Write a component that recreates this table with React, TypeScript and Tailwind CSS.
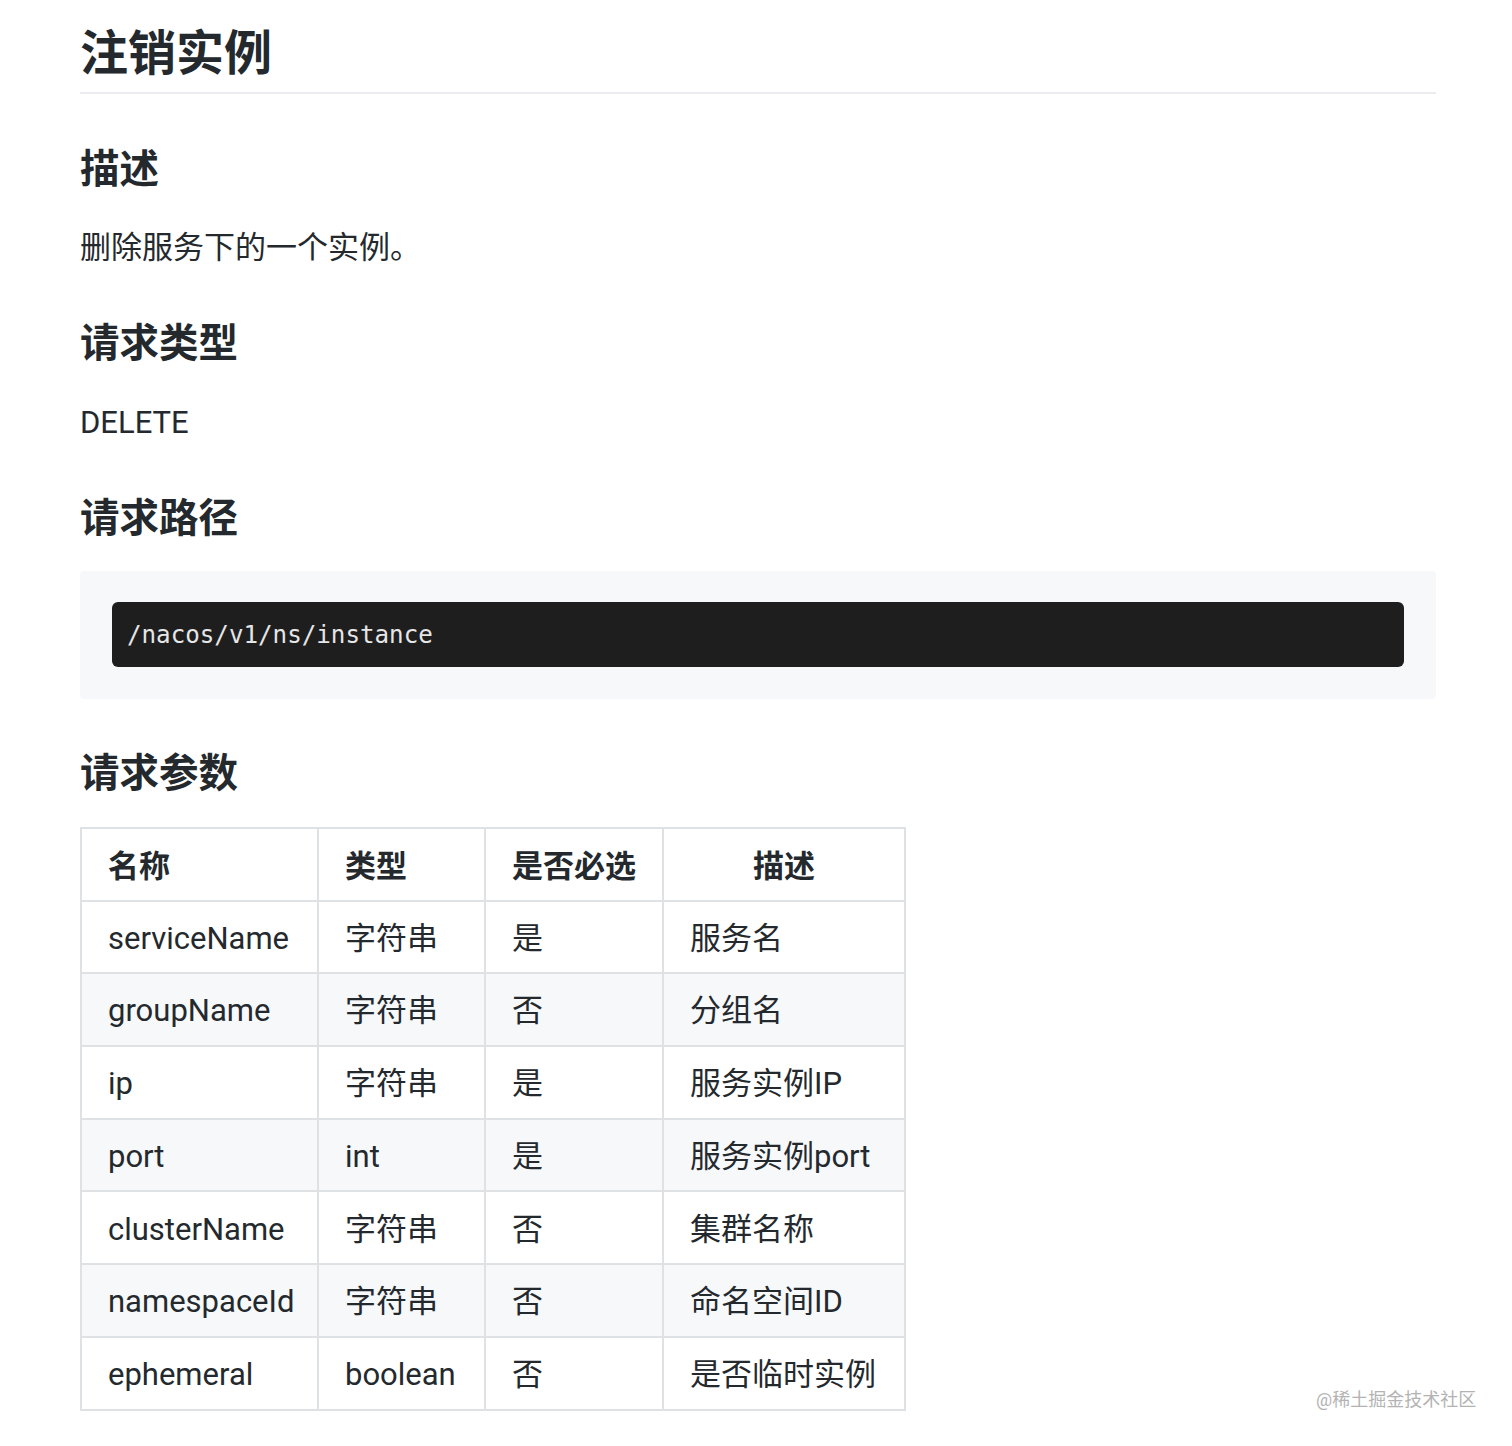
const rows = [
  ['serviceName', '字符串', '是', '服务名'],
  ['groupName', '字符串', '否', '分组名'],
  ['ip', '字符串', '是', '服务实例IP'],
  ['port', 'int', '是', '服务实例port'],
  ['clusterName', '字符串', '否', '集群名称'],
  ['namespaceId', '字符串', '否', '命名空间ID'],
  ['ephemeral', 'boolean', '否', '是否临时实例'],
]

const cjk = "font-['Noto_Sans','Noto_Sans_CJK_SC',sans-serif]"

function H2({ children, className = '' }: { children: React.ReactNode; className?: string }) {
  return (
    <h2 className={`${cjk} text-[39.5px] font-bold leading-[48px] text-[#24292e] ${className}`}>{children}</h2>
  )
}

export default function App() {
  return (
    <div className="relative min-h-[1446px] w-[1512px] bg-white pt-[22px] font-['Roboto','Noto_Sans_CJK_SC',sans-serif]">
      <div className="w-[1436px] pl-[80px]">
        <h1 className={`${cjk} border-b-2 border-[#eaecef] pb-[10px] text-[48px] font-bold leading-[60px] text-[#24292e]`}>
          注销实例
        </h1>

        <H2 className="mt-[50px]">描述</H2>
        <p className={`${cjk} mt-[30px] text-[31px] leading-[48px] text-[#24292e]`}>删除服务下的一个实例。</p>

        <H2 className="mt-[48px]">请求类型</H2>
        <p className="mt-[33px] text-[31px] leading-[48px] text-[#24292e]">DELETE</p>

        <H2 className="mt-[46px]">请求路径</H2>
        <div className="mt-[30px] rounded-[4px] bg-[#f6f8fa] px-[32px] pb-[32px] pt-[31px]">
          <pre className="flex h-[65px] items-center rounded-[6px] bg-[#1e1e1e] px-[15px] pt-[2px] font-['DejaVu_Sans_Mono',monospace] text-[24.2px] text-[#e6e6e6]">
            /nacos/v1/ns/instance
          </pre>
        </div>

        <H2 className="mt-[49px]">请求参数</H2>

        <table className="mt-[31px] table-fixed border-collapse text-[31px] text-[#24292e]">
          <colgroup>
            <col className="w-[237px]" />
            <col className="w-[167px]" />
            <col className="w-[178px]" />
            <col className="w-[242px]" />
          </colgroup>
          <thead>
            <tr className="h-[72.7px]">
              <th className="border-2 border-[#dfe2e5] pl-[26px] pt-[6px] text-left font-bold">名称</th>
              <th className="border-2 border-[#dfe2e5] pl-[26px] pt-[6px] text-left font-bold">类型</th>
              <th className="border-2 border-[#dfe2e5] pl-[26px] pt-[6px] text-left font-bold">是否必选</th>
              <th className="border-2 border-[#dfe2e5] pt-[6px] text-center font-bold">描述</th>
            </tr>
          </thead>
          <tbody>
            {rows.map((r, i) => (
              <tr key={r[0]} className={`h-[72.7px] ${i % 2 === 1 ? 'bg-[#f6f8fa]' : 'bg-white'}`}>
                {r.map((c, j) => (
                  <td key={j} className="border-2 border-[#dfe2e5] pl-[26px] pt-[4px] whitespace-nowrap">
                    {c}
                  </td>
                ))}
              </tr>
            ))}
          </tbody>
        </table>
      </div>

      <div className="absolute left-[1316px] top-[1387px] text-[18px] leading-[26px] text-[#b3b3b3]">
        @稀土掘金技术社区
      </div>
    </div>
  )
}
